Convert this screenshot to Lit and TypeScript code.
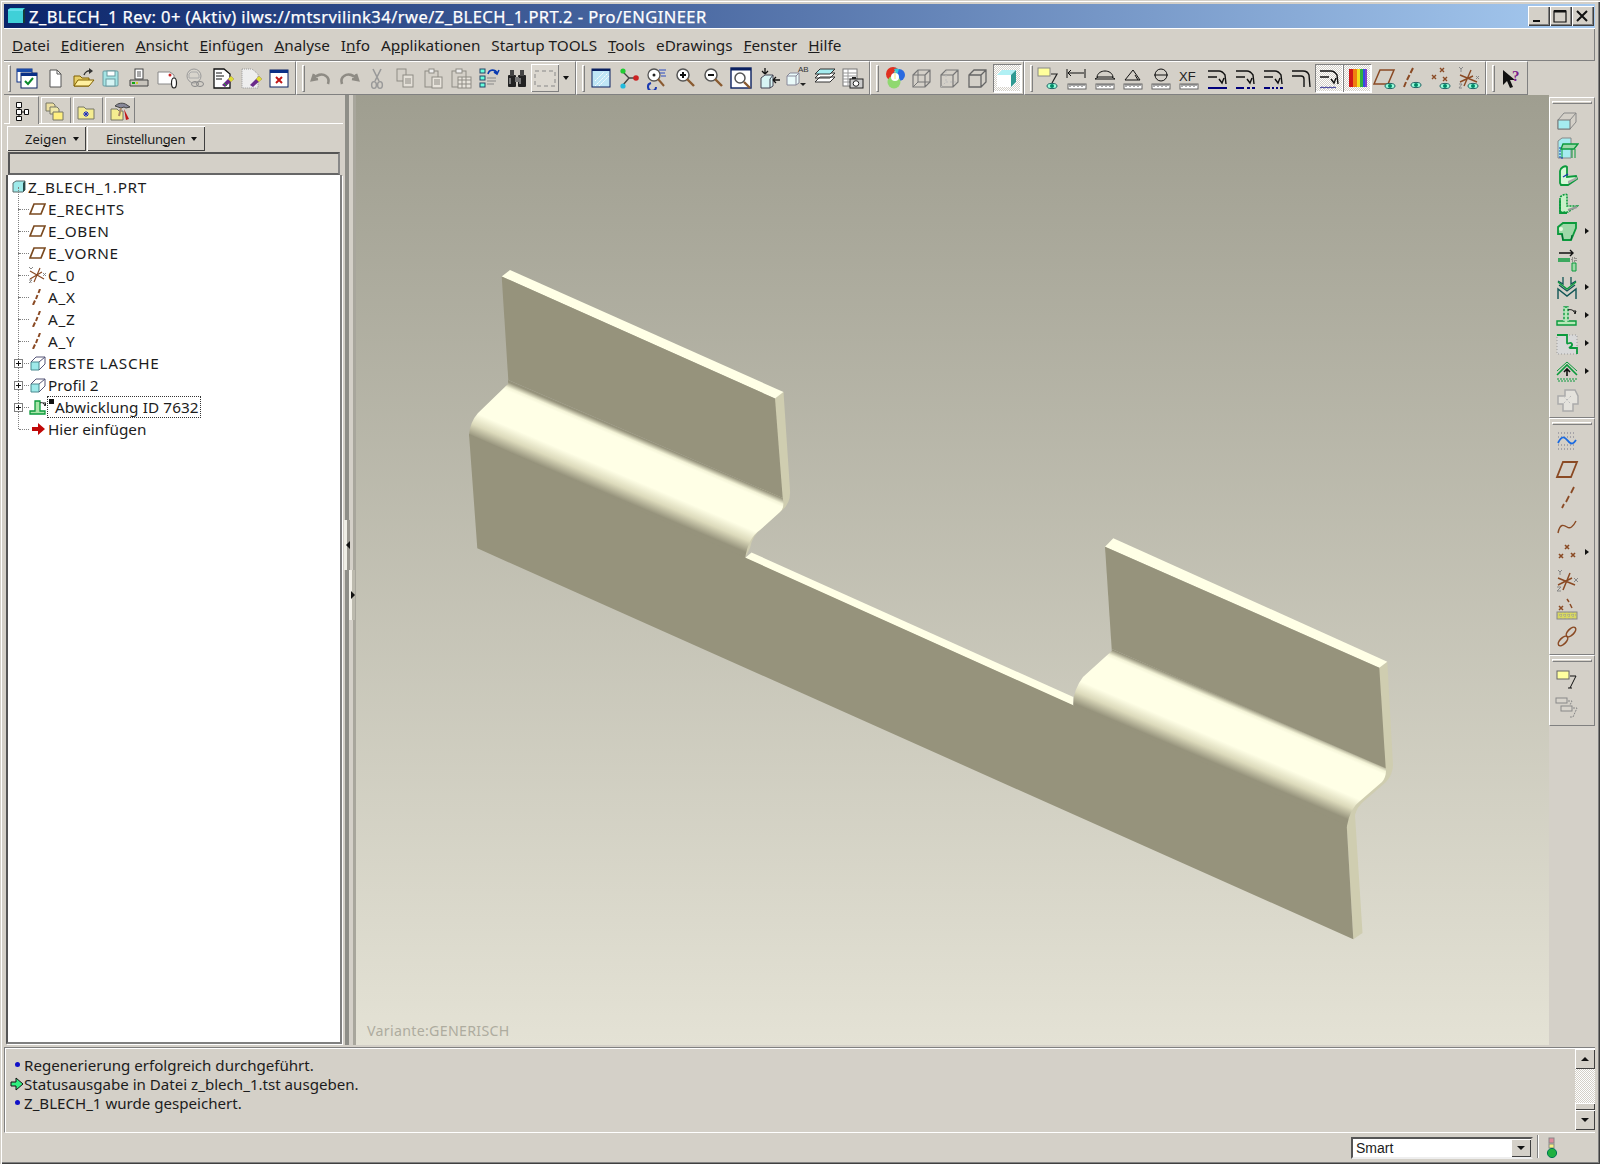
import { LitElement, css, html, svg, SVGTemplateResult } from 'lit'
import { customElement } from 'lit/decorators.js'

const GREEN = '#0b9a3c'
const BROWN = '#8a4a24'

// shared bits of icons
const ruler = svg`<rect x="3" y="18" width="18" height="5" fill="#fff" stroke="#666"/><path d="M5 18v3M7 18v2M9 18v3M11 18v2M13 18v3M15 18v2M17 18v3M19 18v2" stroke="#555" fill="none"/>`
const eye = (x: number, y: number) => svg`<ellipse cx="${x}" cy="${y}" rx="5" ry="2.6" fill="#9fd" stroke="#266"/><circle cx="${x}" cy="${y}" r="2" fill="#086"/>`
const bend = svg`<path d="M3 5h11c3 0 4 1 6 4l1 9M3 11h9M14 13l3 4 2-5" fill="none" stroke="#111" stroke-width="1.4"/>`
const glass = (sign: string) => svg`<circle cx="10" cy="9" r="6" fill="#fff" stroke="#555" stroke-width="1.5"/><path d="${sign}" stroke="#111" stroke-width="2"/><path d="M14 13l7 7" stroke="#8a5a30" stroke-width="2.4"/>`

const top1: SVGTemplateResult[] = [
  svg`<rect x="2" y="3" width="15" height="13" fill="#fff" stroke="#0a2f86"/><rect x="2" y="3" width="15" height="3" fill="#1a4aa8"/><rect x="6" y="7" width="16" height="15" fill="#fff" stroke="#0a2060"/><rect x="6" y="7" width="16" height="3" fill="#0a2f86"/><path d="M10 15l3 3 5-6" stroke="#0a8a2a" stroke-width="2" fill="none"/>`,
  svg`<path d="M7 4h7l4 4v13H7z" fill="#fff" stroke="#555"/><path d="M14 4v4h4" fill="none" stroke="#555"/>`,
  svg`<path d="M3 20V10h6l2 2h7v8z" fill="#e8cf68" stroke="#806000"/><path d="M3 20l4-6h16l-5 6z" fill="#fff0a0" stroke="#806000"/><path d="M13 9c1-3 4-5 7-4" stroke="#333" fill="none" stroke-width="1.4"/><path d="M18 2l4 3-4 3z" fill="#333"/>`,
  svg`<rect x="4" y="5" width="15" height="15" rx="1" fill="#a5e4e4" stroke="#6a9aa0"/><rect x="8" y="5" width="8" height="5" fill="#fff" stroke="#6a9aa0"/><rect x="7" y="13" width="9" height="7" fill="#d6f4f4" stroke="#6a9aa0"/>`,
  svg`<rect x="8" y="3" width="8" height="10" fill="#fff" stroke="#444"/><path d="M10 6h4M10 8h4M10 10h4" stroke="#555"/><path d="M3 14h18v6H3z" fill="#c8c4bc" stroke="#444"/><path d="M5 17h3" stroke="#1a1" stroke-width="2"/><path d="M9 17h2" stroke="#cc3" stroke-width="2"/>`,
  svg`<path d="M3 6h12l4 3v9H3z" fill="#fff" stroke="#888"/><circle cx="15" cy="9" r="1.5" fill="#c22"/><ellipse cx="19" cy="17" rx="2.5" ry="5" fill="#fff" stroke="#222" stroke-width="1.2"/>`,
  svg`<circle cx="11" cy="10" r="7" fill="#d8d4cc" stroke="#999"/><path d="M8 6h6l2 3v3H6V8z" fill="none" stroke="#aaa"/><ellipse cx="12" cy="18" rx="3.5" ry="2.5" fill="none" stroke="#888"/><ellipse cx="17" cy="18" rx="3.5" ry="2.5" fill="none" stroke="#888"/>`,
  svg`<path d="M3 3h10l6 5v14H3z" fill="#fff" stroke="#111" stroke-width="1.3"/><path d="M5 7h6M5 10h8M5 13h6" stroke="#111"/><path d="M11 19l9-9 3 3-9 8z" fill="#6a2a8a"/><path d="M17 13l3-3 3 3-3 3z" fill="#dd3"/><path d="M13 17l3 3" stroke="#2a2"/>`,
  svg`<path d="M3 3h10l6 5v14H3z" fill="#eee" stroke="#999" stroke-dasharray="1 1"/><path d="M11 19l9-9 3 3-9 8z" fill="#6a2a8a"/><path d="M17 13l3-3 3 3-3 3z" fill="#dd3"/>`,
  svg`<rect x="3" y="4" width="18" height="17" fill="#fff" stroke="#0a2060"/><rect x="3" y="4" width="18" height="3" fill="#0a2f86"/><path d="M9 11l6 6M15 11l-6 6" stroke="#c01818" stroke-width="2"/>`,
]
const G = '#8e8b84'
const top2: SVGTemplateResult[] = [
  svg`<path d="M5 8l-2 6 6-1M4 13c3-4 9-6 13-3 3 2 3 5 2 8" fill="none" stroke="${G}" stroke-width="2.6"/>`,
  svg`<path d="M19 8l2 6-6-1M20 13c-3-4-9-6-13-3-3 2-3 5-2 8" fill="none" stroke="${G}" stroke-width="2.6"/>`,
  svg`<path d="M8 3l6 12M16 3l-6 12" stroke="#999" stroke-width="1.6"/><ellipse cx="9" cy="19" rx="2.4" ry="3.4" fill="none" stroke="#999" stroke-width="1.4"/><ellipse cx="15" cy="19" rx="2.4" ry="3.4" fill="none" stroke="#999" stroke-width="1.4"/>`,
  svg`<rect x="4" y="3" width="9" height="12" fill="#d4d0c8" stroke="${G}"/><rect x="10" y="9" width="10" height="12" fill="#e4e0d8" stroke="${G}"/><path d="M12 13h6M12 15h6M12 17h6" stroke="${G}"/>`,
  svg`<rect x="4" y="5" width="13" height="16" fill="#d4d0c8" stroke="${G}"/><rect x="8" y="3" width="5" height="4" fill="#eee" stroke="${G}"/><rect x="11" y="11" width="10" height="11" fill="#e8e4dc" stroke="${G}"/><path d="M13 14h6M13 16h6M13 18h6" stroke="${G}"/>`,
  svg`<rect x="3" y="5" width="14" height="16" fill="#d4d0c8" stroke="${G}"/><rect x="7" y="3" width="6" height="4" fill="#eee" stroke="${G}"/><rect x="9" y="11" width="13" height="11" fill="#e8e4dc" stroke="${G}"/><path d="M9 14h13M9 18h13M13 11v11M17 11v11" stroke="${G}"/>`,
  svg`<rect x="3" y="3" width="5" height="4" fill="#6fd" stroke="#246"/><rect x="3" y="10" width="5" height="4" fill="#6fd" stroke="#246"/><rect x="3" y="17" width="5" height="4" fill="#6fd" stroke="#246"/><path d="M10 12h9M10 15h9M10 18h7" stroke="#888"/><path d="M11 8c1-5 7-5 9-1M22 4l-2 4-3-2" fill="none" stroke="#0a3ab0" stroke-width="1.6"/>`,
  svg`<rect x="3" y="9" width="8" height="12" rx="1" fill="#222"/><rect x="13" y="9" width="8" height="12" rx="1" fill="#222"/><rect x="5" y="4" width="4" height="6" fill="#444"/><rect x="15" y="4" width="4" height="6" fill="#444"/><rect x="10" y="11" width="4" height="5" fill="#777"/><path d="M5 12v6M15 12v6" stroke="#ccc"/>`,
  svg`<rect x="2" y="5" width="20" height="15" fill="none" stroke="#888" stroke-dasharray="4 3"/>`,
]
const top3: SVGTemplateResult[] = [
  svg`<rect x="3" y="3" width="18" height="18" fill="#bfe6f6" stroke="#0a2060"/><rect x="3" y="3" width="18" height="2" fill="#0a2060"/><path d="M6 20L19 7M10 20L20 10M6 15l9-9" stroke="#fff" stroke-dasharray="2 1"/>`,
  svg`<path d="M6 6l6 6-6 7M12 12h7" stroke="#444" stroke-width="1.4" fill="none"/><circle cx="6" cy="5" r="2.6" fill="#2c3"/><circle cx="19" cy="12" r="2.8" fill="#c22"/><circle cx="6" cy="20" r="2.6" fill="#2bd"/>`,
  svg`<circle cx="9" cy="9" r="6" fill="#fff" stroke="#555" stroke-width="1.3"/><circle cx="9" cy="9" r="1.5" fill="#222"/><path d="M14 4h7M15 7h5M16 10h5" stroke="#2a4ac0"/><path d="M13 13l6 7" stroke="#8a5a30" stroke-width="2"/><path d="M6 17a4 4 0 1 0 5 4" fill="none" stroke="#1a3ab0" stroke-width="2"/>`,
  glass('M7 9h6M10 6v6'),
  glass('M7 9h6'),
  svg`<rect x="2" y="2" width="20" height="20" fill="#fff" stroke="#0a2060" stroke-width="1.4"/><rect x="2" y="2" width="20" height="2.5" fill="#0a2060"/><circle cx="11" cy="12" r="5" fill="#fff" stroke="#555" stroke-width="1.5"/><path d="M15 16l6 6" stroke="#8a5a30" stroke-width="2.4"/>`,
  svg`<path d="M4 12l4-3h8v11l-3 2H4z" fill="#d8f4f4" stroke="#445"/><path d="M13 13v9M13 13l3-4" stroke="#445"/><path d="M16 14h7M16 14l3-3M16 14l3 3M8 2v6M8 8l-3-3M8 8l3-3" stroke="#111" stroke-width="1.3" fill="none"/>`,
  svg`<path d="M2 10l3-3h9v10l-3 2H2z" fill="#eafafa" stroke="#889"/><path d="M11 10v9M2 10h9M11 10l3-3" stroke="#889"/><text x="13" y="6" font-size="8" font-family="Liberation Sans, sans-serif" fill="#333">AB</text><path d="M15 17h6l-3 3z" fill="#222"/>`,
  svg`<path d="M2 16l5-5h15l-5 5zM2 12l5-5h15l-5 5z" fill="#fff" stroke="#333"/><path d="M2 8l5-5h15l-5 5z" fill="#a5ecf0" stroke="#333"/>`,
  svg`<rect x="2" y="3" width="14" height="17" fill="#fff" stroke="#777"/><path d="M2 7h14M2 10h14M2 13h14M2 16h14M7 3v17" stroke="#999"/><rect x="9" y="13" width="13" height="9" fill="#ccc" stroke="#222"/><circle cx="15" cy="17.5" r="2.8" fill="#fff" stroke="#222"/><rect x="11" y="11" width="4" height="2" fill="#222"/>`,
]
const top4: SVGTemplateResult[] = [
  svg`<circle cx="10" cy="8" r="7" fill="#e03020" /><circle cx="16" cy="9" r="6" fill="#2a6ae0"/><path d="M11 3a7 7 0 0 1 5 0l-2 6z" fill="#30c8d8"/><circle cx="11" cy="16" r="6.5" fill="#90d870"/><circle cx="12" cy="11" r="4" fill="#fff"/><path d="M12 5v8" stroke="#ee7"/>`,
  svg`<path d="M2 9l5-5h12v12l-5 5H2zM2 9h12v12M14 9l5-5" fill="none" stroke="#777" stroke-width="1.2"/><path d="M2 21l5-5V4M7 16h12" fill="none" stroke="#777"/>`,
  svg`<path d="M2 9l5-5h12v12l-5 5H2zM2 9h12v12M14 9l5-5" fill="none" stroke="#777" stroke-width="1.2"/><path d="M2 21l5-5V4M7 16h12" fill="none" stroke="#bbb" stroke-dasharray="2 2"/>`,
  svg`<path d="M2 9l5-5h12v12l-5 5H2zM2 9h12v12M14 9l5-5" fill="none" stroke="#666" stroke-width="1.3"/>`,
  svg`<path d="M2 9l5-5h14v12l-5 5H2z" fill="#fff"/><path d="M2 9l5-5h14l-5 5z" fill="#b0f0f4"/><path d="M16 9l5-5v12l-5 5z" fill="#2e9a92"/>`,
]
const top5: SVGTemplateResult[] = [
  svg`<rect x="1" y="2" width="12" height="8" fill="#ffff9c" stroke="#888"/><path d="M14 8h6l-5 9" fill="none" stroke="#222" stroke-width="1.2"/>${eye(15, 20)}`,
  svg`<path d="M2 3v9M3 7h16M3 7l3-3M3 7l3 3M20 3v9" fill="none" stroke="#111"/>${ruler}`,
  svg`<path d="M4 11c1-8 15-8 16 0zM2 13h20M2 13l3-2M22 13l-3-2" fill="none" stroke="#111"/>${ruler}`,
  svg`<path d="M4 14h15L12 4zM14 9l3 5" fill="none" stroke="#111"/>${ruler}`,
  svg`<circle cx="12" cy="9" r="6" fill="none" stroke="#111"/><path d="M5 9h14" stroke="#111"/>${ruler}`,
  svg`<text x="2" y="15" font-size="13" font-family="Liberation Sans, sans-serif" fill="#222">XF</text>${ruler}`,
  svg`${bend}<rect x="3" y="21" width="19" height="2" fill="#00007c"/>`,
  svg`${bend}<path d="M3 22h8M14 22h3M19 22h3" stroke="#00007c" stroke-width="2"/>`,
  svg`${bend}<path d="M3 22h6M11 22h2M15 22h2M19 22h3" stroke="#00007c" stroke-width="2"/>`,
  svg`<path d="M3 5h11c3 0 5 1 6 4l1 12M3 10h9c2 0 3 1 3 3v8" fill="none" stroke="#111" stroke-width="1.4"/>`,
  svg`${bend}<path d="M3 22l2-1 2 1 2-1 2 1 2-1 2 1 2-1 2 1" fill="none" stroke="#22228c"/>`,
  svg`<rect x="4" y="3" width="4" height="18" fill="#d01818"/><rect x="8" y="3" width="4" height="18" fill="#f08010"/><rect x="12" y="3" width="3" height="18" fill="#f0e020"/><rect x="15" y="3" width="3" height="18" fill="#30b040"/><rect x="18" y="3" width="2" height="18" fill="#3050e0"/><rect x="20" y="3" width="2" height="18" fill="#8040c8"/>`,
  svg`<path d="M7 4h14l-6 14H1z" fill="none" stroke="${BROWN}" stroke-width="1.5"/>${eye(17, 20)}`,
  svg`<path d="M12 2l-2.5 5M8.5 9l-2.5 5M5 16l-2 5" stroke="${BROWN}" stroke-width="2"/>${eye(15, 19)}`,
  svg`<path d="M11 2l4 4M15 2l-4 4M3 9l4 4M7 9l-4 4M14 11l4 4M18 11l-4 4" stroke="${BROWN}" stroke-width="1.4"/>${eye(16, 20)}`,
  svg`<path d="M14 4L7 20M3 9l17 7M3 16l13-6" stroke="${BROWN}" stroke-width="1.4" fill="none"/><path d="M2 1l2 2 2-2M4 3v3M19 10l3 3M22 10l-3 3M2 18h3l-3 4h3" stroke="#888" fill="none"/>${eye(16, 20)}`,
]
const help = svg`<path d="M4 4v15l4-4 3 7 3-1-3-7h5z" fill="#111"/><text x="13" y="15" font-size="15" font-weight="700" font-family="Liberation Serif, serif" fill="#7a1a8a">?</text>`

const sideA: { icon: SVGTemplateResult; more?: boolean }[] = [
  { icon: svg`<path d="M3 12l6-7h12v9l-6 7H3z" fill="none" stroke="#888"/><rect x="3" y="12" width="12" height="9" fill="#a5ecf0" stroke="#777"/><path d="M15 12l6-7" stroke="#888"/>` },
  { icon: svg`<rect x="3" y="5" width="13" height="17" fill="#fff"/><path d="M3 5l4-3h9v20H3z" fill="#a5ecf0" stroke="#888"/><path d="M8 8h15l-4 5H6z" fill="#9ed8a8" stroke="${GREEN}" stroke-width="1.4"/><path d="M7 13v9M17 13v9M20 13v9" stroke="${GREEN}"/><path d="M5 11v11h3" stroke="#1a3ab0" stroke-dasharray="2 1" fill="none"/>` },
  { icon: svg`<path d="M5 19V7c0-3 5-6 7-4v10l9-1 1 3-9 6H6z" fill="#d8f8d8" stroke="${GREEN}" stroke-width="1.8"/><path d="M8 13l5-3" stroke="#1a3ab0" stroke-width="1.4"/><path d="M13 17l9-4v2l-9 5" fill="#aaa"/>` },
  { icon: svg`<path d="M5 20V6c0-2 6-5 7-3v11l10 0-9 6H6z" fill="#c8f0c8" stroke="${GREEN}" stroke-width="1.6" stroke-dasharray="2 1"/><path d="M5 8v13h7" fill="none" stroke="${GREEN}" stroke-width="1.8"/><path d="M13 18l9-3" stroke="#999" stroke-width="2"/>` },
  { icon: svg`<path d="M3 7l5-4h13v5l-5 12H8l-1-6H3z" fill="#9ed8a8" stroke="${GREEN}" stroke-width="1.8"/><circle cx="6" cy="9" r="2" fill="#e8f8e0"/><path d="M8 20l-1-6M16 20l1-5" stroke="#063" stroke-width="1.2"/>`, more: true },
  { icon: svg`<path d="M4 5h14M15 2l3 3-3 3" fill="none" stroke="#111" stroke-width="1.4"/><path d="M3 11h12M3 13h12" stroke="${GREEN}" stroke-width="1.4"/><rect x="17" y="10" width="4" height="3" fill="none" stroke="#555" stroke-dasharray="1 1"/><path d="M17 15h4v8h-4z" fill="#9ed8a8" stroke="${GREEN}"/>` },
  { icon: svg`<path d="M8 1v7l-5-3M16 1v7l5-3M4 9l8 6 8-6" fill="none" stroke="#155" stroke-width="1.3"/><path d="M3 23V13l9 7 9-7v10" fill="none" stroke="#155" stroke-width="1.4"/><path d="M3 6l9 7 9-7" fill="none" stroke="${GREEN}" stroke-width="1.4"/>`, more: true },
  { icon: svg`<path d="M2 21v-4h7V3h4v14h8v4z" fill="#b8e8b8" stroke="${GREEN}" stroke-width="1.4"/><path d="M9 3v14M13 3v14" stroke="#fff" stroke-dasharray="2 2"/><path d="M13 6c3-1 6 0 7 4M20 10l1-3-3 0" stroke="#111" fill="none"/>`, more: true },
  { icon: svg`<rect x="2" y="3" width="20" height="19" fill="#d8d8d8" stroke="#999" stroke-dasharray="1 2"/><path d="M2 3h10v8c0 2 4-2 5 1s-4 3-2 4h7v6" fill="none" stroke="${GREEN}" stroke-width="1.8"/>`, more: true },
  { icon: svg`<path d="M2 15L12 5l10 10" fill="none" stroke="${GREEN}" stroke-width="1.6"/><path d="M2 11l10-9 10 9" fill="none" stroke="${GREEN}"/><path d="M12 16V9M9 12l3-3 3 3" stroke="#111" stroke-width="1.6" fill="none"/><path d="M2 19h20M3 21h18" stroke="${GREEN}" stroke-dasharray="2 1"/>`, more: true },
  { icon: svg`<path d="M3 8h7V2h10l3 6v8h-5v7H8v-7H3z" fill="#e4e2dc" stroke="#aaa" stroke-width="1.5"/><path d="M8 8l8 8M16 8l-8 8" stroke="#bbb" stroke-dasharray="2 2"/>` },
]
const sideB: { icon: SVGTemplateResult; more?: boolean }[] = [
  { icon: svg`<path d="M3 4h18M3 8h18M3 16h18M3 20h18" stroke="#778" stroke-dasharray="1 2"/><path d="M3 14c5-10 8-4 11-1s5 1 7-2" fill="none" stroke="#1a6ae0" stroke-width="1.8"/>` },
  { icon: svg`<path d="M8 5h14l-6 15H2z" fill="none" stroke="${BROWN}" stroke-width="1.8"/>` },
  { icon: svg`<path d="M19 2l-3 6M14 11l-3 6M9 19l-2 4" stroke="${BROWN}" stroke-width="1.8"/>` },
  { icon: svg`<path d="M3 20c2-10 6-8 9-6s6 0 9-6" fill="none" stroke="${BROWN}" stroke-width="1.4"/>` },
  { icon: svg`<path d="M10 4l4 4M14 4l-4 4M4 13l4 4M8 13l-4 4M16 12l4 4M20 12l-4 4" stroke="${BROWN}" stroke-width="1.6"/>`, more: true },
  { icon: svg`<path d="M15 4L8 21M3 9l17 7M3 16l14-7" stroke="${BROWN}" stroke-width="1.5" fill="none"/><path d="M3 1l2 2 2-2M5 3v3M19 9l4 4M23 9l-4 4M2 18h4l-4 4h4" stroke="#888" fill="none"/>` },
  { icon: svg`<path d="M4 9l4 4M8 9l-4 4M12 2l2 3M15 7l2 4" stroke="${BROWN}" stroke-width="1.5"/><rect x="2" y="15" width="20" height="7" fill="#d8d860" stroke="#888"/><path d="M2 18h20M6 15v7M10 15v7M14 15v7M18 15v7" stroke="#999" stroke-dasharray="1 1"/>` },
  { icon: svg`<ellipse cx="16" cy="7" rx="6" ry="3" transform="rotate(-45 16 7)" fill="none" stroke="${BROWN}" stroke-width="1.6"/><ellipse cx="8" cy="16" rx="6" ry="3" transform="rotate(-45 8 16)" fill="none" stroke="${BROWN}" stroke-width="1.6"/>` },
]
const sideC: SVGTemplateResult[] = [
  svg`<rect x="2" y="3" width="12" height="8" fill="#ffffa0" stroke="#666"/><path d="M15 8h6l-6 12" fill="none" stroke="#111"/><path d="M13 20h4" stroke="#111"/>`,
  svg`<rect x="1" y="2" width="11" height="5" fill="#d8d4cc" stroke="#888"/><rect x="6" y="10" width="11" height="5" fill="#d8d4cc" stroke="#888"/><path d="M13 5h4l-2 4M18 12h4l-4 9h-3" fill="none" stroke="#888" stroke-dasharray="2 1"/>`,
]

const treeIcons: Record<string, SVGTemplateResult> = {
  part: svg`<path d="M1 4l3-2h9v9l-2 2H1z" fill="#9eeaea" stroke="#5a6a6a"/><path d="M11 4v9l2-2V2z" fill="#274a4a"/>`,
  plane: svg`<path d="M5 3h11l-4 10H1z" fill="#fff" stroke="#7a4a20" stroke-width="1.7"/>`,
  csys: svg`<path d="M11 1L5 15M1 4l14 8M1 12l12-7" stroke="#8a4a24" stroke-width="1.2" fill="none"/><path d="M0 0l2 2 2-2M14 6l3 3M17 6l-3 3M0 13h3l-3 3h3" stroke="#888" fill="none"/>`,
  axis: svg`<path d="M11 0l-1.5 4M8.5 6L7 10M6 11.5L4 16" stroke="#8a4a24" stroke-width="2"/>`,
  feature: svg`<path d="M2 7h8v8H2z" fill="#9eeaea" stroke="#4a8a90"/><path d="M2 7l5-5h9v7l-6 6M10 7l6-5" fill="none" stroke="#557"/>`,
  flat: svg`<path d="M1 15v-3h5V2h5v10h5v3z" fill="#a8e4a8" stroke="#0b9a3c" stroke-width="1.3"/><path d="M11 4c2-1 4 0 5 3M16 7l1-3-3 0" stroke="#111" fill="none"/>`,
  insert: svg`<path d="M3 6h6V2l7 6-7 6v-4H3z" fill="#c00808"/>`,
}
interface Row {
  label: string
  icon: string
  plus?: boolean
  focus?: boolean
}
const rows: Row[] = [
  { label: 'E_RECHTS', icon: 'plane' },
  { label: 'E_OBEN', icon: 'plane' },
  { label: 'E_VORNE', icon: 'plane' },
  { label: 'C_0', icon: 'csys' },
  { label: 'A_X', icon: 'axis' },
  { label: 'A_Z', icon: 'axis' },
  { label: 'A_Y', icon: 'axis' },
  { label: 'ERSTE LASCHE', icon: 'feature', plus: true },
  { label: 'Profil 2', icon: 'feature', plus: true },
  { label: 'Abwicklung ID 7632', icon: 'flat', plus: true, focus: true },
  { label: 'Hier einfügen', icon: 'insert' },
]

@customElement('app-root')
export class AppRoot extends LitElement {
  static styles = css`
    :host {
      display: block;
      width: 1600px;
      height: 1164px;
      font-family: 'Noto Sans', 'Liberation Sans', Arial, sans-serif;
      color: #1c1c1c;
    }
    .window {
      box-sizing: border-box;
      width: 1600px;
      height: 1164px;
      padding: 4px 5px 4px 4px;
      background: #d4d0c8;
      display: flex;
      flex-direction: column;
      box-shadow: inset 1px 1px 0 #d4d0c8, inset 2px 2px 0 #fff, inset -1px -1px 0 #404040, inset -2px -2px 0 #808080;
    }
    .title {
      height: 24px;
      flex: none;
      display: flex;
      align-items: center;
      background: linear-gradient(90deg, #0a246a, #a6caf0);
      color: #fff;
      font-size: 16.5px;
      letter-spacing: 0.45px;
      -webkit-text-stroke: 0.25px #fff;
      padding-left: 3px;
      white-space: nowrap;
    }
    .title svg {
      margin-right: 2px;
    }
    .controls {
      margin-left: auto;
      display: flex;
      margin-right: 1px;
    }
    .controls button {
      box-sizing: border-box;
      width: 22px;
      height: 20px;
      padding: 0;
      border: none;
      background: #d4d0c8;
      box-shadow: inset 1px 1px 0 #fff, inset -1px -1px 0 #404040, inset -2px -2px 0 #808080;
      display: flex;
      align-items: center;
      justify-content: center;
    }
    .menu {
      height: 33px;
      flex: none;
      box-sizing: border-box;
      display: flex;
      align-items: center;
      gap: 10.9px;
      padding: 1px 0 0 8px;
      font-size: 15.3px;
      border-bottom: 1px solid #808080;
      border-top: 1px solid #fff;
      box-shadow: inset -1px 0 0 #808080;
    }
    .toolrow {
      height: 34px;
      flex: none;
      display: flex;
    }
    .toolbar {
      display: flex;
      align-items: center;
      box-sizing: border-box;
      padding: 0 2px 0 5px;
      border-top: 1px solid #fff;
      border-bottom: 1px solid #808080;
      border-right: 1px solid #808080;
      border-left: 1px solid #fff;
    }
    .toolbar.first {
      padding-left: 4px;
      border-left: none;
    }
    .grip {
      box-sizing: border-box;
      width: 3px;
      height: 27px;
      margin-right: 2px;
      border-top: 1px solid #fff;
      border-left: 1px solid #fff;
      border-right: 1px solid #808080;
      border-bottom: 1px solid #808080;
      flex: none;
    }
    .tb {
      width: 28px;
      height: 28px;
      flex: none;
      box-sizing: border-box;
      display: flex;
      align-items: center;
      justify-content: center;
    }
    .tb.raised {
      box-shadow: inset 1px 1px 0 #fff, inset -1px -1px 0 #808080;
      background: #dcd8d0;
    }
    .tb.on {
      box-shadow: inset 1px 1px 0 #808080, inset -1px -1px 0 #fff, 1px 1px 0 #fff;
      background: repeating-conic-gradient(#fff 0 25%, #d4d0c8 0 50%) 0 0 / 2px 2px;
    }
    .drop {
      width: 14px;
      display: flex;
      justify-content: center;
    }
    .tri {
      width: 0;
      height: 0;
      border-left: 3.5px solid transparent;
      border-right: 3.5px solid transparent;
      border-top: 4px solid #111;
      display: inline-block;
    }
    .main {
      flex: none;
      height: 950px;
      display: flex;
    }
    .panel {
      width: 339px;
      flex: none;
      display: flex;
      flex-direction: column;
    }
    .tabs {
      height: 29px;
      flex: none;
      display: flex;
      align-items: flex-end;
      gap: 1px;
      padding-left: 5px;
      border-bottom: 1px solid #fff;
      box-sizing: border-box;
    }
    .tab {
      width: 30px;
      height: 26px;
      margin-right: 1px;
      box-sizing: border-box;
      border: 1px solid #fff;
      border-right-color: #808080;
      border-bottom: none;
      display: flex;
      align-items: center;
      justify-content: center;
    }
    .tab svg {
      margin-right: 4px;
    }
    .tab.last svg {
      margin-right: 1px;
    }
    .tab.active {
      height: 28px;
      margin-bottom: -1px;
      background: #d4d0c8;
    }
    .actions {
      height: 28px;
      flex: none;
      display: flex;
      padding: 2px 0 0 3px;
      box-sizing: border-box;
      gap: 1px;
    }
    .act {
      height: 25px;
      box-sizing: border-box;
      display: flex;
      align-items: center;
      gap: 6px;
      font-size: 13px;
      box-shadow: inset 1px 1px 0 #fff, inset -1px -1px 0 #404040;
    }
    .act.a {
      width: 79px;
      padding-left: 18px;
    }
    .act.b {
      width: 118px;
      padding-left: 19px;
      letter-spacing: -0.3px;
    }
    .filter {
      height: 23px;
      flex: none;
      box-sizing: border-box;
      margin: 0 3px 0 4px;
      border: 2px solid #555;
      border-right-color: #888;
      border-bottom-color: #666;
      background: #d4d0c8;
    }
    .treebox {
      flex: 1;
      margin: 0 1px 1px 2px;
      background: #fff;
      border: 2px solid #555;
      border-top: none;
      border-right-color: #808080;
      border-bottom-color: #808080;
      padding-top: 1px;
      box-shadow: 1px 1px 0 #fff;
    }
    .row {
      height: 22px;
      position: relative;
      display: flex;
      align-items: center;
      font-size: 15.3px;
      padding-left: 24px;
      white-space: nowrap;
    }
    .row.root {
      padding-left: 4px;
    }
    .caps {
      letter-spacing: 0.7px;
    }
    .row.child::before {
      content: '';
      position: absolute;
      left: 10px;
      top: -11px;
      height: 22px;
      border-left: 1px dotted #808080;
    }
    .row.child::after {
      content: '';
      position: absolute;
      left: 11px;
      top: 11px;
      width: 10px;
      border-top: 1px dotted #808080;
    }
    .ticon {
      width: 17px;
      height: 16px;
      flex: none;
      margin-right: 2px;
      margin-left: -3px;
    }
    .root .ticon {
      margin: 0 2px 0 0;
      width: 14px;
    }
    .plus {
      position: absolute;
      left: 6px;
      top: 7px;
      width: 9px;
      height: 9px;
      box-sizing: border-box;
      border: 1px solid #808080;
      background: #fff;
      z-index: 1;
    }
    .plus::before {
      content: '';
      position: absolute;
      left: 1px;
      top: 3px;
      width: 5px;
      height: 1px;
      background: #111;
    }
    .plus::after {
      content: '';
      position: absolute;
      left: 3px;
      top: 1px;
      width: 1px;
      height: 5px;
      background: #111;
    }
    .focus {
      position: relative;
      outline: 1px dotted #333;
      outline-offset: 0;
      padding: 0 1px 0 7px;
      letter-spacing: 0.1px;
    }
    .focus::before {
      content: '';
      position: absolute;
      left: 1px;
      top: 2px;
      width: 5px;
      height: 5px;
      background: #111;
    }
    .sash {
      width: 13px;
      flex: none;
      position: relative;
      background: linear-gradient(90deg, #d4d0c8 0 2px, #8e8e88 2px 6px, #d4d0c8 6px 10px, #a8a69c 10px 13px);
    }
    .grab {
      position: absolute;
      width: 5px;
      height: 50px;
      background: #eeece4;
      display: flex;
      align-items: center;
      justify-content: center;
    }
    .grab.l {
      left: 1px;
      top: 425px;
      background: linear-gradient(90deg, #efeee6 0 3px, #9a9890 3px);
      width: 6px;
    }
    .grab.r {
      left: 6px;
      top: 475px;
      background: linear-gradient(90deg, #f2f0e8 0 3px, #bcbaae 3px);
      width: 6px;
    }
    .arrow-l {
      border-top: 4px solid transparent;
      border-bottom: 4px solid transparent;
      border-right: 4px solid #111;
      margin-left: 2px;
    }
    .arrow-r {
      border-top: 4px solid transparent;
      border-bottom: 4px solid transparent;
      border-left: 4px solid #111;
      margin-left: 2px;
    }
    .canvas {
      width: 1193px;
      flex: none;
      background: linear-gradient(180deg, #9f9e90, #e4e2d5);
    }
    .canvas svg {
      display: block;
    }
    .side {
      width: 46px;
      flex: none;
      display: flex;
      flex-direction: column;
      padding-top: 2px;
    }
    .sgroup {
      box-sizing: border-box;
      display: flex;
      flex-direction: column;
      align-items: center;
      border-top: 1px solid #fff;
      border-left: 1px solid #fff;
      border-right: 1px solid #808080;
      border-bottom: 1px solid #808080;
      padding-bottom: 3px;
    }
    .sgrip {
      box-sizing: border-box;
      width: 40px;
      height: 3px;
      margin: 3px 0 2px;
      border-top: 1px solid #fff;
      border-left: 1px solid #fff;
      border-right: 1px solid #808080;
      border-bottom: 1px solid #808080;
    }
    .sgroup.last .sgrip {
      margin-bottom: 4px;
    }
    .sb {
      width: 44px;
      height: 28px;
      flex: none;
      position: relative;
      display: flex;
      align-items: center;
      justify-content: center;
    }
    .sb svg {
      margin-right: 10px;
    }
    .sb .more {
      position: absolute;
      right: 5px;
      top: 10px;
      border-top: 3.5px solid transparent;
      border-bottom: 3.5px solid transparent;
      border-left: 4px solid #111;
    }
    .bottom {
      flex: none;
      height: 86px;
      margin-top: 2px;
      display: flex;
      box-sizing: border-box;
      border: 1px solid #808080;
      border-right: none;
      border-bottom: 1px solid #fff;
      box-shadow: inset 1px 1px 0 #fff;
    }
    .msgs {
      flex: 1;
      padding: 7px 0 0 5px;
      font-size: 15.1px;
    }
    .msg {
      height: 19px;
      display: flex;
      align-items: center;
      white-space: nowrap;
    }
    .mark {
      width: 14px;
      flex: none;
      display: flex;
      align-items: center;
      justify-content: center;
    }
    .dot {
      width: 5px;
      height: 5px;
      border-radius: 50%;
      background: #1010c8;
    }
    .scroll {
      width: 20px;
      flex: none;
      display: flex;
      flex-direction: column;
      margin: 1px 0 0 0;
    }
    .sbtn {
      box-sizing: border-box;
      width: 20px;
      height: 20px;
      flex: none;
      display: flex;
      align-items: center;
      justify-content: center;
      box-shadow: inset 1px 1px 0 #fff, inset -1px -1px 0 #404040;
    }
    .tri-up {
      border-left: 4px solid transparent;
      border-right: 4px solid transparent;
      border-bottom: 4px solid #111;
    }
    .tri-down {
      border-left: 4px solid transparent;
      border-right: 4px solid transparent;
      border-top: 4px solid #111;
    }
    .track {
      height: 34px;
      flex: none;
      background: repeating-conic-gradient(#fff 0 25%, #d4d0c8 0 50%) 0 0 / 2px 2px;
    }
    .thumb {
      height: 7px;
      flex: none;
      box-shadow: inset 1px 1px 0 #fff, inset -1px -1px 0 #404040;
    }
    .status {
      flex: 1;
      display: flex;
      align-items: center;
      justify-content: flex-end;
      box-sizing: border-box;
      padding-right: 35px;
      position: relative;
    }
    .combo {
      box-sizing: border-box;
      width: 182px;
      height: 22px;
      background: #fff;
      border: 2px solid #555;
      border-right-color: #d4d0c8;
      border-bottom-color: #eee;
      display: flex;
      align-items: center;
      padding-left: 3px;
      font-family: 'Liberation Sans', Arial, sans-serif;
      font-size: 14px;
      position: relative;
      right: 27px;
      top: 1px;
    }
    .combo .btn {
      margin-left: auto;
      box-sizing: border-box;
      width: 20px;
      height: 18px;
      background: #d4d0c8;
      display: flex;
      align-items: center;
      justify-content: center;
      box-shadow: inset 1px 1px 0 #fff, inset -1px -1px 0 #404040;
    }
    .stsep {
      position: absolute;
      right: 56px;
      top: 2px;
      bottom: 2px;
      border-left: 1px solid #808080;
      border-right: 1px solid #fff;
    }
    .traffic {
      position: absolute;
      right: 37px;
      top: 4px;
    }
  `

  private tb(icon: SVGTemplateResult, cls = '') {
    return html`<div class="tb ${cls}"><svg width="24" height="24" viewBox="0 0 24 24">${icon}</svg></div>`
  }

  private side(item: { icon: SVGTemplateResult; more?: boolean }) {
    return html`<div class="sb">
      <svg width="24" height="24" viewBox="0 0 24 24">${item.icon}</svg>
      ${item.more ? html`<span class="more"></span>` : ''}
    </div>`
  }

  private model() {
    return svg`
      <defs>
        <linearGradient id="bendA" gradientUnits="userSpaceOnUse" x1="508" y1="382" x2="483" y2="441">
          <stop offset="0" stop-color="#96937c"/><stop offset=".08" stop-color="#f4f4d8"/><stop offset=".13" stop-color="#ffffe6"/>
          <stop offset=".64" stop-color="#ffffe6"/><stop offset=".82" stop-color="#dcdabb"/><stop offset="1" stop-color="#96937c"/>
        </linearGradient>
        <linearGradient id="bendB" gradientUnits="userSpaceOnUse" x1="1112" y1="650" x2="1087" y2="709">
          <stop offset="0" stop-color="#96937c"/><stop offset=".08" stop-color="#f4f4d8"/><stop offset=".13" stop-color="#ffffe6"/>
          <stop offset=".64" stop-color="#ffffe6"/><stop offset=".82" stop-color="#dcdabb"/><stop offset="1" stop-color="#96937c"/>
        </linearGradient>
      </defs>
      <!-- side edges -->
      <path d="M775 398L783.5 392L790 490Q791 504 781 511L762 528Q752 536 750 548L745 558Z" fill="#cfcdb0"/>
      <path d="M1379.3 667.7L1387.3 661.7L1393 765Q1393 774 1386 782L1364 801Q1357 807 1355 815L1362.5 933L1353.3 939.3L1346.7 825Z" fill="#cfcdb0"/>
      <!-- top faces -->
      <path d="M501.7 276.5L510 270L783.5 392L775 398.5Z" fill="#ffffe6"/>
      <path d="M1105 546.7L1113.3 538.3L1387.3 661.7L1379.3 667.7Z" fill="#ffffe6"/>
      <path d="M745 558L751.5 552.5L1073.3 697L1073.3 705.7Z" fill="#ffffe6"/>
      <!-- bends, lower edge runs on under the flat face so no seam shows -->
      <path d="M508 380L782.7 498Q785 508 780 512L760 530Q748 538 745 559L470 437L469 435Q470 422 478 413L508 384Z" fill="url(#bendA)"/>
      <path d="M1111.7 649L1385.7 768Q1387 776 1382 782L1360 801Q1350 808 1346.7 827L1075 708L1073.3 705Q1073 690 1083 677L1111.7 651Z" fill="url(#bendB)"/>
      <!-- flat faces -->
      <path d="M501.7 276.5L775 398.5L782.7 498L508.3 380Z" fill="#96937c"/>
      <path d="M1105 546.7L1379.3 667.7L1385.7 768.3L1111.7 649Z" fill="#96937c"/>
      <path d="M469 434L745 557.5L1073.3 705.3L1346.7 825L1353.3 939.3L477.3 548.3Z" fill="#96937c"/>
      <text x="367" y="1036" font-size="14.2" letter-spacing="0.3" font-family="Noto Sans, sans-serif" fill="#aeac9f">Variante:GENERISCH</text>
    `
  }

  render() {
    return html`<div class="window">
      <div class="title">
        <svg width="20" height="18" viewBox="0 0 20 18">
          <path d="M1 3l2-2h15v15H1z" fill="#3fd0d8"/><path d="M16 3l2-2v15l-2 0z" fill="#153a3a"/><path d="M1 3h15" stroke="#8ef"/>
        </svg>
        <span>Z_BLECH_1 Rev: 0+ (Aktiv) ilws://mtsrvilink34/rwe/Z_BLECH_1.PRT.2 - Pro/ENGINEER</span>
        <div class="controls">
          <button><svg width="14" height="14"><rect x="2" y="11" width="7" height="2" fill="#111"/></svg></button>
          <button><svg width="14" height="14"><path d="M1 2h12v11H1z M1 3h12" fill="none" stroke="#111" stroke-width="1.2"/><rect x="1" y="1" width="12" height="2" fill="#111"/></svg></button>
          <button><svg width="14" height="14"><path d="M2 2l10 10M12 2L2 12" stroke="#111" stroke-width="2"/></svg></button>
        </div>
      </div>

      <div class="menu">
        <span><u>D</u>atei</span><span><u>E</u>ditieren</span><span><u>A</u>nsicht</span><span><u>E</u>infügen</span>
        <span><u>A</u>nalyse</span><span>I<u>n</u>fo</span><span>A<u>p</u>plikationen</span><span>Startup TOOLS</span>
        <span><u>T</u>ools</span><span>eDrawin<u>g</u>s</span><span><u>F</u>enster</span><span><u>H</u>ilfe</span>
      </div>

      <div class="toolrow">
        <div class="toolbar first"><div class="grip"></div>${top1.map((i) => this.tb(i))}</div>
        <div class="toolbar">
          <div class="grip"></div>
          ${top2.map((i, n) => this.tb(i, n === 8 ? 'raised' : ''))}
          <div class="drop"><span class="tri"></span></div>
        </div>
        <div class="toolbar"><div class="grip"></div>${top3.map((i) => this.tb(i))}</div>
        <div class="toolbar"><div class="grip"></div>${top4.map((i, n) => this.tb(i, n === 4 ? 'on' : ''))}</div>
        <div class="toolbar"><div class="grip"></div>${top5.map((i, n) => this.tb(i, n === 10 || n === 11 ? 'on' : ''))}</div>
        <div class="toolbar"><div class="grip"></div>${this.tb(help)}</div>
      </div>

      <div class="main">
        <div class="panel">
          <div class="tabs">
            <div class="tab active">
              <svg width="14" height="20"><path d="M1.5 1.5h5v5h-5zM1.5 8.5h5v5h-5zM1.5 15.5h5v4h-5zM9.5 8.5h4v5h-4z" fill="#fff" stroke="#111"/><path d="M4 6.5v2M4 13.5v2M6.5 11h3" stroke="#111"/></svg>
            </div>
            <div class="tab">
              <svg width="20" height="20"><path d="M2 2h7l2 2v6H2z" fill="#eee0a0" stroke="#776"/><path d="M6 6h7l2 2v5H6z" fill="#efe8a8" stroke="#776"/><path d="M9 11h10v8H9z" fill="#fff080" stroke="#776"/></svg>
            </div>
            <div class="tab">
              <svg width="20" height="20"><path d="M2 6h6l2 2h8v10H2z" fill="#f4ec90" stroke="#776"/><path d="M7 13h6M10 10v6M8 11l4 4M12 11l-4 4" stroke="#1a2ac0"/></svg>
            </div>
            <div class="tab last">
              <svg width="22" height="22"><path d="M2 9h6l2 2h4v9H2z" fill="#f4ec90" stroke="#776"/><path d="M6 6c3-3 8-4 12-1l3 2-4 1-2-1-3 1z" fill="#889" stroke="#444"/><path d="M12 8l-2 8" stroke="#a86" stroke-width="2"/><path d="M15 9l5 10-3 1z" fill="#c01818"/></svg>
            </div>
          </div>
          <div class="actions">
            <div class="act a"><span>Zei<u>g</u>en</span><span class="tri"></span></div>
            <div class="act b"><span>Einstellun<u>g</u>en</span><span class="tri"></span></div>
          </div>
          <div class="filter"></div>
          <div class="treebox">
            <div class="row root">
              <svg class="ticon" viewBox="0 0 14 16">${treeIcons.part}</svg><span class="caps">Z_BLECH_1.PRT</span>
            </div>
            ${rows.map(
              (r) => html`<div class="row child">
                ${r.plus ? html`<span class="plus"></span>` : ''}
                <svg class="ticon" viewBox="0 0 17 16">${treeIcons[r.icon]}</svg>
                <span class="${r.focus ? 'focus' : r.label === r.label.toUpperCase() ? 'caps' : ''}">${r.label}</span>
              </div>`,
            )}
          </div>
        </div>

        <div class="sash">
          <div class="grab l"><span class="arrow-l"></span></div>
          <div class="grab r"><span class="arrow-r"></span></div>
        </div>

        <div class="canvas">
          <svg width="1193" height="950" viewBox="356 95 1193 950">${this.model()}</svg>
        </div>

        <div class="side">
          <div class="sgroup">
            <div class="sgrip"></div>
            ${sideA.map((i) => this.side(i))}
          </div>
          <div class="sgroup">
            <div class="sgrip"></div>
            ${sideB.map((i) => this.side(i))}
          </div>
          <div class="sgroup last">
            <div class="sgrip"></div>
            ${sideC.map((i) => this.side({ icon: i }))}
          </div>
        </div>
      </div>

      <div class="bottom">
        <div class="msgs">
          <div class="msg"><span class="mark"><span class="dot"></span></span>Regenerierung erfolgreich durchgeführt.</div>
          <div class="msg">
            <span class="mark">
              <svg width="14" height="14"><path d="M1 5h5V1l7 6-7 6V9H1z" fill="#30f080" stroke="#111"/></svg>
            </span>
            Statusausgabe in Datei z_blech_1.tst ausgeben.
          </div>
          <div class="msg"><span class="mark"><span class="dot"></span></span>Z_BLECH_1 wurde gespeichert.</div>
        </div>
        <div class="scroll">
          <div class="sbtn"><span class="tri-up"></span></div>
          <div class="track"></div>
          <div class="thumb"></div>
          <div class="sbtn"><span class="tri-down"></span></div>
        </div>
      </div>

      <div class="status">
        <div class="combo">
          Smart
          <div class="btn"><span class="tri-down"></span></div>
        </div>
        <div class="stsep"></div>
        <svg class="traffic" width="12" height="22" viewBox="0 0 12 22">
          <rect x="3" y="1" width="5" height="5" fill="#e08a9a" stroke="#888"/>
          <rect x="3" y="7" width="5" height="4" fill="#f4f080" stroke="#888"/>
          <circle cx="6" cy="16" r="4.6" fill="#20b040" stroke="#075"/>
        </svg>
      </div>
    </div>`
  }
}
